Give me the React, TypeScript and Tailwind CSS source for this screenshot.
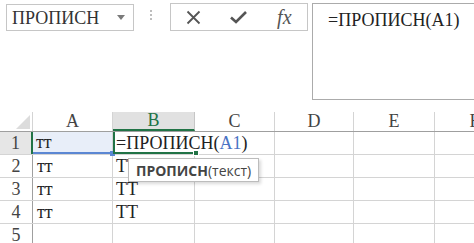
import React from "react";

const serif = { fontFamily: '"Liberation Serif", "Times New Roman", serif' };

const cols = [
  { name: "A", w: 80 },
  { name: "B", w: 82 },
  { name: "C", w: 80 },
  { name: "D", w: 79 },
  { name: "E", w: 81 },
  { name: "F", w: 80 },
];

const rows: { a: string; b: React.ReactNode }[] = [
  { a: "тт", b: null },
  { a: "тт", b: "ТТ" },
  { a: "тт", b: "ТТ" },
  { a: "тт", b: "ТТ" },
  { a: "", b: "" },
];

export default function App() {
  return (
    <div className="relative w-[474px] h-[243px] overflow-hidden bg-white text-[#222]" style={serif}>
      {/* Top bar */}
      <div className="flex items-start h-[112px]">
        <div className="ml-[6px] mt-[4px] w-[128px] h-[27px] border border-[#c6c6c6] flex items-center pl-[5px] pr-[8px] justify-between">
          <span className="text-[18px] leading-none text-[#333]">ПРОПИСН</span>
          <svg width="8" height="5" viewBox="0 0 8 5"><path d="M0 0 L8 0 L4 5 Z" fill="#7a7a7a" /></svg>
        </div>
        <div className="ml-[16px] mt-[10px] flex flex-col gap-[2px]">
          <div className="w-[2px] h-[2px] bg-[#bdbdbd]" />
          <div className="w-[2px] h-[2px] bg-[#bdbdbd]" />
          <div className="w-[2px] h-[2px] bg-[#bdbdbd]" />
        </div>
        <div className="ml-[18px] mt-[3px] w-[138px] h-[28px] border border-[#c6c6c6] flex items-center">
          <div className="w-[46px] flex justify-center">
            <svg width="15" height="15" viewBox="0 0 15 15"><path d="M1.5 1.5 L13.5 13.5 M13.5 1.5 L1.5 13.5" stroke="#555" strokeWidth="1.8" /></svg>
          </div>
          <div className="w-[46px] flex justify-center">
            <svg width="17" height="14" viewBox="0 0 17 14"><path d="M1 7.5 L6 12 L16 2" stroke="#555" strokeWidth="2.6" fill="none" /></svg>
          </div>
          <div className="w-[46px] flex justify-center">
            <span className="italic text-[20px] leading-none text-[#555]" style={serif}>fx</span>
          </div>
        </div>
        <div className="ml-[4px] mt-[3px] flex-1 h-[97px] border border-r-0 border-[#ababab] pl-[15px] pt-[5px]">
          <span className="text-[18px] leading-none text-[#222]">=ПРОПИСН(А1)</span>
        </div>
      </div>

      {/* Header row */}
      <div className="flex h-[20px] border-b border-[#9f9f9f]">
        <div className="w-[33px] shrink-0 border-r border-[#d4d4d4] relative flex items-end justify-end pr-[2px] pb-[2px]">
          <svg width="14" height="14" viewBox="0 0 14 14"><path d="M14 0 L14 14 L0 14 Z" fill="#dcdcdc" /></svg>
        </div>
        {cols.map((c) => (
          <div
            key={c.name}
            className={
              c.name === "B"
                ? "shrink-0 flex items-center justify-center border-r border-[#c6c6c6] bg-[#e1e1e1] border-b-2 border-b-[#217346] text-[#217346] text-[18px]"
                : "shrink-0 flex items-center justify-center border-r border-[#d4d4d4] text-[#444] text-[18px]"
            }
            style={{ width: c.w }}
          >
            {c.name}
          </div>
        ))}
      </div>

      {/* Rows */}
      {rows.map((r, i) => (
        <div key={i} className="flex h-[23px] border-b border-[#d4d4d4]">
          <div
            className={
              i === 0
                ? "w-[33px] shrink-0 flex items-center justify-center bg-[#e6e6e6] border-r-2 border-[#217346] text-[18px] text-[#444]"
                : "w-[33px] shrink-0 flex items-center justify-center border-r border-[#9f9f9f] text-[18px] text-[#444]"
            }
          >
            {i + 1}
          </div>
          <div
            className={
              i === 0
                ? "w-[80px] shrink-0 flex items-center pl-[3px] bg-[#e8eef9] border-b-2 border-[#5b87d3] border-r border-r-[#d4d4d4] text-[18px] relative"
                : "w-[80px] shrink-0 flex items-center pl-[4px] border-r border-[#d4d4d4] text-[18px]"
            }
          >
            {r.a}
            {i === 0 && <div className="absolute right-[-3px] bottom-[-4px] w-[5px] h-[5px] bg-[#5b87d3]" />}
          </div>
          {i === 0 ? (
            <div className="w-[162px] shrink-0 flex border-r border-[#d4d4d4]">
              <div className="w-[82px] shrink-0 border-l-2 border-b-2 border-[#217346] relative">
                <div className="absolute right-[-4px] bottom-[-4px] w-[6px] h-[6px] bg-[#217346] border border-white" />
              </div>
            </div>
          ) : (
            <div className="w-[82px] shrink-0 flex items-center pl-[3px] border-r border-[#d4d4d4] text-[18px]">
              {r.b}
            </div>
          )}
          {cols.slice(i === 0 ? 3 : 2).map((c) => (
            <div key={c.name} className="shrink-0 border-r border-[#d4d4d4]" style={{ width: c.w }} />
          ))}
        </div>
      ))}

      {/* Overflowing edit text in B1 */}
      <div className="absolute left-[116px] top-[133px] h-[21px] flex items-center text-[18px] whitespace-nowrap z-10">
        =ПРОПИСН(<span className="text-[#4a73c4]">A1</span>)
      </div>

      {/* Tooltip */}
      <div
        className="absolute left-[128px] top-[158px] h-[24px] px-[7px] flex items-center bg-white border border-[#bcbcbc] shadow-[2px_2px_3px_rgba(0,0,0,0.15)] text-[14px] text-[#444] z-20"
        style={{ fontFamily: '"Open Sans", "Noto Sans", sans-serif' }}
      >
        <span className="font-bold">ПРОПИСН</span>
        <span>(текст)</span>
      </div>
    </div>
  );
}
